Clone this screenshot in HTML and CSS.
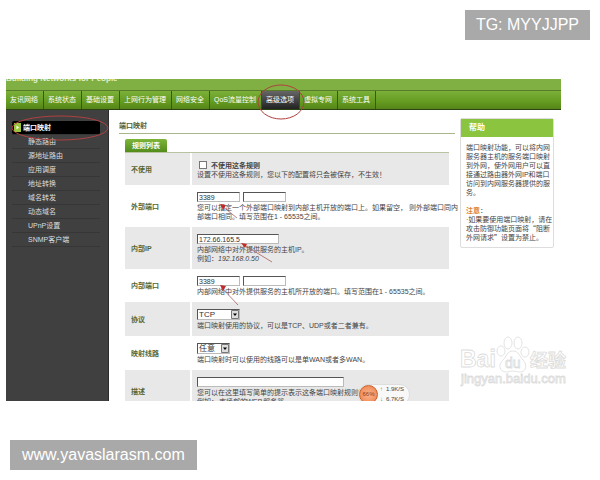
FILE: index.html
```html
<!DOCTYPE html>
<html lang="zh-CN">
<head>
    <meta charset="UTF-8">
    <meta name="viewport" content="width=device-width, initial-scale=1.0">
    <title>端口映射</title>
    <link rel="stylesheet" href="styles.css">
</head>
<body>

    <div class="top-bar">
        <div class="tag">TG: MYYJJPP</div>
    </div>

    <div class="screen">
        <div class="router">
            <header class="slogan"><span>Building Networks for People</span></header>

            <!-- Main navigation -->
            <nav class="nav">
                <a href="#">友讯网络</a>
                <a href="#">系统状态</a>
                <a href="#">基础设置</a>
                <a href="#">上网行为管理</a>
                <a href="#">网络安全</a>
                <a href="#">QoS流量控制</a>
                <a href="#" class="active">高级选项</a>
                <a href="#">虚拟专网</a>
                <a href="#">系统工具</a>
            </nav>

            <div class="content">
                <aside class="sidebar">
                    <a href="#" class="current">
                        <svg viewBox="0 0 7 9" class="marker"><rect width="7" height="9" fill="#9bc53a"/><path d="M2.5 2.5 5 4.5 2.5 6.5z" fill="#fff"/></svg>
                        端口映射
                    </a>
                    <a href="#">静态路由</a>
                    <a href="#">源地址路由</a>
                    <a href="#">应用调度</a>
                    <a href="#">地址转换</a>
                    <a href="#">域名转发</a>
                    <a href="#">动态域名</a>
                    <a href="#">UPnP设置</a>
                    <a href="#">SNMP客户端</a>
                </aside>

                <main class="main">
                    <h1>端口映射</h1>
                    <div class="rules">
                        <div class="tabs"><h2>规则列表</h2></div>
                        <table>
                            <tr>
                                <th scope="row">不使用</th>
                                <td>
                                    <label class="check"><input type="checkbox">不使用这条规则</label>
                                    <p>设置不使用这条规则，您以下的配置将只会被保存，不生效！</p>
                                </td>
                            </tr>
                            <tr>
                                <th scope="row"><label for="outPort">外部端口</label></th>
                                <td>
                                    <div class="fields">
                                        <input type="text" id="outPort" class="port" value="3389">
                                        <input type="text" class="port" aria-label="外部端口结束">
                                    </div>
                                    <p>您可以指定一个外部端口映射到内部主机开放的端口上。如果留空， 则外部端口同内<br>部端口相同。填写范围在1 - 65535之间。</p>
                                </td>
                            </tr>
                            <tr>
                                <th scope="row"><label for="innerIp">内部IP</label></th>
                                <td>
                                    <div class="fields"><input type="text" id="innerIp" class="ip" value="172.66.165.5"></div>
                                    <p>内部网络中对外提供服务的主机IP。<br>例如：<i>192.168.0.50</i></p>
                                </td>
                            </tr>
                            <tr>
                                <th scope="row"><label for="inPort">内部端口</label></th>
                                <td>
                                    <div class="fields">
                                        <input type="text" id="inPort" class="port" value="3389">
                                        <input type="text" class="port" aria-label="内部端口结束">
                                    </div>
                                    <p>内部网络中对外提供服务的主机所开放的端口。填写范围在1 - 65535之间。</p>
                                </td>
                            </tr>
                            <tr>
                                <th scope="row"><label for="protocol">协议</label></th>
                                <td>
                                    <div class="fields"><select id="protocol" class="protocol"><option>TCP</option><option>UDP</option></select></div>
                                    <p>端口映射使用的协议，可以是TCP、UDP或者二者兼有。</p>
                                </td>
                            </tr>
                            <tr>
                                <th scope="row"><label for="line">映射线路</label></th>
                                <td>
                                    <div class="fields"><select id="line" class="line"><option>任意</option></select></div>
                                    <p>端口映射时可以使用的线路可以是单WAN或者多WAN。</p>
                                </td>
                            </tr>
                            <tr>
                                <th scope="row"><label for="desc">描述</label></th>
                                <td>
                                    <div class="fields"><input type="text" id="desc" class="desc"></div>
                                    <p>您可以在这里填写简单的提示表示这条端口映射规则的意<br>例如：<i>市场部的WEB服务器</i></p>
                                </td>
                            </tr>
                        </table>
                    </div>
                </main>

                <section class="help">
                    <h2>帮助</h2>
                    <div class="help-text">
                        <p>端口映射功能，可以将内网<br>服务器主机的服务端口映射<br>到外网，使外网用户可以直<br>接通过路由器外网IP和端口<br>访问到内网服务器提供的服<br>务。</p>
                        <p><strong>注意</strong>：<br>·如果要使用端口映射，请在<br>攻击防御功能页面将<span class="quote">“</span>阻断<br>外网请求<span class="quote">”</span>设置为禁止。</p>
                    </div>
                </section>
            </div>

            <!-- Network speed widget -->
            <div class="speed">
                <span class="ball">66%</span>
                <div class="rates">
                    <span><b class="up">↑</b>1.9K/S</span>
                    <span><b class="down">↓</b>6.7K/S</span>
                </div>
            </div>
        </div>

        <!-- Red circles and arrows -->
        <svg class="marks" viewBox="0 0 555 322">
            <g fill="none" stroke="#b04040">
                <ellipse cx="275" cy="23" rx="23" ry="17"/>
                <ellipse cx="54" cy="49" rx="48" ry="12"/>
            </g>
            <g stroke="#a86060" stroke-width=".8">
                <path d="M216 127 231 139M238 166 266 183M216 209 232 226"/>
            </g>
            <path fill="#c02a2a" d="M214 125l6 1-3 5zM235 164l6 1-2 4zM214 206l6 1-3 5z"/>
        </svg>

        <!-- Paw logo -->
        <svg class="paw" viewBox="0 0 110 56" fill="#fff" stroke="#dcdcdc" stroke-width=".8">
            <text x="0" y="31" class="logo-big">Bai</text>
            <ellipse cx="48" cy="7" rx="4" ry="6"/>
            <ellipse cx="58" cy="7" rx="4" ry="6"/>
            <ellipse cx="41" cy="15" rx="4" ry="5"/>
            <ellipse cx="65" cy="16" rx="4" ry="5"/>
            <path d="M53 15c6 0 6 5 10 9 4 4 4 12-3 12-3 0-4-1-7-1s-4 1-7 1c-7 0-8-8-3-12 4-4 4-9 10-9z"/>
            <text x="45" y="32" class="logo-du">du</text>
            <text x="70" y="31" class="logo-cn">经验</text>
            <text x="1" y="47" class="logo-url">jingyan.baidu.com</text>
        </svg>
    </div>

    <div class="bottom-bar">
        <div class="tag">www.yavaslarasm.com</div>
    </div>

</body>
</html>
```
FILE: styles.css
```css
* {
    box-sizing: border-box;
}

body {
    margin: 0;
    height: 100vh;
    display: flex;
    flex-direction: column;
    background-color: #fff;
    color: #444;
    font-family: "Liberation Sans", "Noto Sans CJK SC", sans-serif;
    font-size: 7px;
    line-height: 9px;
}

h1, h2, p {
    margin: 0;
    font-size: 7px;
}

a {
    color: #fff;
    text-decoration: none;
}

/* Bars above and below the screen */
.top-bar, .bottom-bar {
    flex: 0 0 79px;
    padding: 10px;
    display: flex;
}

.top-bar {
    justify-content: flex-end;
    align-items: flex-start;
}

.bottom-bar {
    align-items: flex-end;
}

.tag {
    padding: 0 12px;
    background-color: #a9a9a9;
    color: #fff;
    font-size: 16px;
    line-height: 30px;
}

.top-bar .tag {
    padding: 0 11px;
}

.screen {
    flex: 1;
    min-height: 0;
    position: relative;
    margin: 0 39px 0 6px;
}

.router {
    position: relative;
    height: 100%;
    overflow: hidden;
    display: flex;
    flex-direction: column;
}

/* Header and navigation */
.slogan {
    flex: 0 0 11px;
    overflow: hidden;
    background-color: #80b043;
    color: #e4f2cd;
    font-size: 8px;
    font-weight: bold;
}

.slogan span {
    display: block;
    margin-top: -5px;
}

.nav {
    flex: 0 0 20px;
    display: flex;
    background: linear-gradient(#7cb03a, #649b20 60%, #55851a);
    border-top: 1px solid #567c2b;
    border-bottom: 1px solid #2c4411;
}

.nav a {
    padding: 0 5px 0 4px;
    line-height: 18px;
    border-right: 1px solid #39590f;
    white-space: nowrap;
}

.nav .active {
    background: linear-gradient(#666, #222);
}

.content {
    flex: 1;
    min-height: 0;
    display: flex;
    align-items: flex-start;
}

/* Left menu */
.sidebar {
    flex: 0 0 103px;
    align-self: stretch;
    padding: 11px 8px 0 6px;
    background-color: #404040;
    border-right: 1px solid #2c2c2c;
}

.sidebar a {
    display: block;
    height: 14px;
    padding-left: 16px;
    line-height: 13px;
    color: #ddd;
    border-bottom: 1px solid #363636;
}

.sidebar .current {
    display: flex;
    align-items: center;
    gap: 2px;
    padding-left: 2px;
    background-color: #000;
    border-radius: 2px;
    color: #fff;
    font-weight: bold;
}

.marker {
    width: 7px;
    height: 9px;
}

/* Form */
.main {
    flex: 1;
    min-width: 0;
    padding: 8px 5px 0 10px;
}

.main h1 {
    line-height: 15px;
    border-bottom: 1px solid #a9b58a;
    color: #52603a;
}

.rules {
    padding: 5px 6px 0;
}

.tabs {
    display: flex;
    border-bottom: 1px solid #b9c2a2;
}

.tabs h2 {
    padding: 0 7px;
    line-height: 13px;
    border-radius: 2px 2px 0 0;
    background: linear-gradient(#7db53a, #548c1c);
    color: #fff;
}

table {
    width: 100%;
    table-layout: fixed;
    border-collapse: collapse;
}

th {
    width: 66px;
    padding: 0 6px;
    border-right: 2px solid #fff;
    text-align: left;
    color: #586630;
}

td {
    padding: 7px 5px 6px;
    white-space: nowrap;
}

tr:nth-child(odd) {
    background-color: #e8e8e8;
}

.check {
    display: flex;
    align-items: center;
    gap: 4px;
    height: 10px;
    font-weight: bold;
}

.check input {
    appearance: none;
    width: 8px;
    height: 8px;
    margin: 0 0 0 2px;
    background-color: #fff;
    border: 1px solid #777;
}

.fields {
    display: flex;
    gap: 3px;
    padding-bottom: 1px;
}

.fields input, .fields select {
    height: 10px;
    padding: 0 1px;
    border: 1px solid #bbb;
    border-top-color: #555;
    border-left-color: #555;
    border-radius: 0;
    background-color: #fff;
    color: #333;
    font-family: inherit;
    font-size: 7px;
    line-height: 8px;
}

.fields select {
    appearance: none;
    height: 11px;
    font-size: 8px;
    line-height: 9px;
    background-image: url("data:image/svg+xml,%3Csvg xmlns='http://www.w3.org/2000/svg' viewBox='0 0 8 9'%3E%3Cpath d='M.5.5h7v8h-7z' fill='%23ddd' stroke='%23777'/%3E%3Cpath d='M2 3.5h4L4 6z'/%3E%3C/svg%3E");
    background-repeat: no-repeat;
    background-position: right center;
    background-size: 8px 9px;
}

.fields .port, .fields .protocol {
    width: 43px;
}

.fields .ip {
    width: 82px;
}

.fields .line {
    width: 33px;
}

.fields .desc {
    width: 147px;
}

/* Help box */
.help {
    flex: 0 0 94px;
    margin: 8px 7px 0 0;
    border: 1px solid #ddd;
    border-radius: 2px;
}

.help h2 {
    padding-left: 8px;
    line-height: 18px;
    background-color: #8bc53f;
    color: #fff;
    font-size: 8px;
}

.help-text {
    display: grid;
    gap: 9px;
    padding: 6px 0 5px 5px;
    white-space: nowrap;
}

.help strong {
    color: #e0832f;
}

.quote {
    font-family: "Noto Sans CJK SC", sans-serif;
}

/* Speed widget over the form */
.speed {
    position: absolute;
    left: 352px;
    bottom: -4px;
    display: flex;
    gap: 2px;
    padding-right: 5px;
    border: 1px solid #ddd;
    border-radius: 10px;
    background-color: #f8f8f8;
}

.ball {
    width: 19px;
    height: 19px;
    border: 1px solid #c4602d;
    border-radius: 50%;
    background: radial-gradient(#f9b48b, #ee7e4a);
    color: #8a3a18;
    font-size: 6px;
    line-height: 17px;
    text-align: center;
}

.rates {
    display: grid;
    font-size: 6px;
}

.rates b {
    display: inline-block;
    width: 6px;
}

.up {
    color: #e0662a;
}

.down {
    color: #2a9a4a;
}

/* Drawings over the screen */
.marks {
    position: absolute;
    left: 0;
    top: 0;
    width: 555px;
    height: 322px;
    pointer-events: none;
}

.paw {
    position: absolute;
    right: -9px;
    bottom: 9px;
    width: 110px;
    height: 56px;
    pointer-events: none;
}

.logo-big {
    font-size: 23px;
    font-weight: bold;
}

.logo-du {
    font-size: 14px;
}

.logo-cn {
    font-size: 18px;
    font-weight: bold;
}

.logo-url {
    font-size: 13px;
}
```
